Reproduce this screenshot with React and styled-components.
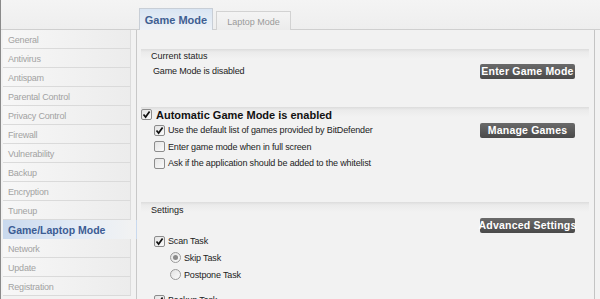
import React from 'react'
import styled, { createGlobalStyle } from 'styled-components'

const Global = createGlobalStyle`
  html, body { margin: 0; padding: 0; background: #f2f2f2; }
  body { font-family: "Liberation Sans", Arial, sans-serif; }
  #root { width: 600px; height: 299px; overflow: hidden; }
`

const navItems = [
  'General', 'Antivirus', 'Antispam', 'Parental Control', 'Privacy Control',
  'Firewall', 'Vulnerability', 'Backup', 'Encryption', 'Tuneup',
  'Game/Laptop Mode', 'Network', 'Update', 'Registration'
]

export default function App() {
  return (
    <>
      <Global />
      <Window>
        <TopBar>
          <TopLeft />
          <Tabs>
            <Tab active>Game Mode</Tab>
            <Tab>Laptop Mode</Tab>
          </Tabs>
        </TopBar>
        <Body>
          <Sidebar>
            {navItems.map((item) => (
              <NavItem key={item} selected={item === 'Game/Laptop Mode'}>{item}</NavItem>
            ))}
          </Sidebar>
          <Content>
            <Band>Current status</Band>
            <Row>
              <Label indent={16}>Game Mode is disabled</Label>
              <ActionButton>Enter Game Mode</ActionButton>
            </Row>
            <Spacer h={28} />
            <Band tall pad={0}>
              <CheckRow>
                <Checkbox checked />
                <BigLabel>Automatic Game Mode is enabled</BigLabel>
              </CheckRow>
            </Band>
            <Row>
              <CheckRow indent={17}>
                <Checkbox checked />
                <Label>Use the default list of games provided by BitDefender</Label>
              </CheckRow>
              <ActionButton>Manage Games</ActionButton>
            </Row>
            <Row h={17}>
              <CheckRow indent={17}>
                <Checkbox />
                <Label>Enter game mode when in full screen</Label>
              </CheckRow>
            </Row>
            <Row h={16}>
              <CheckRow indent={17}>
                <Checkbox />
                <Label>Ask if the application should be added to the whitelist</Label>
              </CheckRow>
            </Row>
            <Spacer h={31} />
            <Band tall>Settings</Band>
            <Row>
              <span />
              <ActionButton>Advanced Settings</ActionButton>
            </Row>
            <Row>
              <CheckRow indent={17}>
                <Checkbox checked />
                <Label>Scan Task</Label>
              </CheckRow>
            </Row>
            <Row h={17}>
              <CheckRow indent={33}>
                <Radio checked />
                <Label>Skip Task</Label>
              </CheckRow>
            </Row>
            <Row h={17}>
              <CheckRow indent={33}>
                <Radio />
                <Label>Postpone Task</Label>
              </CheckRow>
            </Row>
            <Spacer h={8} />
            <Row h={18}>
              <CheckRow indent={17}>
                <Checkbox checked />
                <Label>Backup Task</Label>
              </CheckRow>
            </Row>
          </Content>
        </Body>
      </Window>
    </>
  )
}

function Checkbox({ checked }) {
  return (
    <Box>
      {checked && (
        <svg width="9" height="9" viewBox="0 0 9 9">
          <path d="M1.5 4.5 L3.6 7 L7.6 1.5" fill="none" stroke="#111" strokeWidth="1.7" />
        </svg>
      )}
    </Box>
  )
}

function Radio({ checked }) {
  return <RadioCircle>{checked && <Dot />}</RadioCircle>
}

const Window = styled.div`
  width: 600px;
  height: 299px;
  display: flex;
  flex-direction: column;
  background: #f2f2f2;
  border-left: 1px solid #8a8a8a;
  box-sizing: border-box;
`

const TopBar = styled.div`
  height: 29px;
  display: flex;
  border-bottom: 1px solid #cfcfcf;
  background: linear-gradient(#f4f4f4, #eeeeee);
`

const TopLeft = styled.div`
  width: 138px;
  flex: none;
`

const Tabs = styled.div`
  display: flex;
  align-items: flex-end;
  gap: 3px;
`

const Tab = styled.div`
  height: ${(p) => (p.active ? 22 : 19)}px;
  width: ${(p) => (p.active ? 74 : 75)}px;
  box-sizing: border-box;
  margin-bottom: -1px;
  display: flex;
  align-items: center;
  justify-content: center;
  border: 1px solid ${(p) => (p.active ? '#c8ced6' : '#d2d2d2')};
  border-bottom: none;
  background: ${(p) => (p.active ? 'linear-gradient(#d9e5f3, #eef2f7)' : 'linear-gradient(#f4f4f4, #ececec)')};
  color: ${(p) => (p.active ? '#3f5f92' : '#9a9a9a')};
  font-size: ${(p) => (p.active ? '11px' : '9px')};
  font-weight: ${(p) => (p.active ? 'bold' : 'normal')};
  padding-top: ${(p) => (p.active ? '1px' : '2px')};
`

const Body = styled.div`
  flex: 1;
  display: flex;
  min-height: 0;
`

const Sidebar = styled.div`
  width: 136px;
  flex: none;
  padding-left: 2px;
  box-sizing: border-box;
  border-right: 1px solid #c8c8c8;
`

const NavItem = styled.div`
  height: 19px;
  box-sizing: border-box;
  padding-left: 5px;
  padding-top: 1px;
  display: flex;
  align-items: center;
  border-bottom: 1px solid ${(p) => (p.selected ? 'transparent' : '#dadada')};
  border-right: 1px solid ${(p) => (p.selected ? 'transparent' : '#dcdcdc')};
  background: ${(p) => (p.selected
    ? 'linear-gradient(90deg, #c9d9ee, #e6edf6 60%, #f2f2f2)'
    : 'linear-gradient(90deg, #f7f7f7, #ececec)')};
  color: ${(p) => (p.selected ? '#3c5c94' : '#a2a2a2')};
  font-size: ${(p) => (p.selected ? '10.5px' : '9px')};
  font-weight: ${(p) => (p.selected ? 'bold' : 'normal')};
  letter-spacing: ${(p) => (p.selected ? '0' : '-0.2px')};
  white-space: nowrap;
  width: ${(p) => (p.selected ? '134px' : '128px')};
`

const Content = styled.div`
  flex: 1;
  padding-top: 19px;
  padding-right: 5px;
  display: flex;
  flex-direction: column;
  border-right: 1px solid #c4c4c4;
  margin-right: 5px;
  overflow: hidden;
`

const Band = styled.div`
  height: ${(p) => (p.tall ? 15 : 14)}px;
  flex: none;
  padding-left: ${(p) => (p.pad ?? 10)}px;
  display: flex;
  align-items: center;
  margin-left: 4px;
  background: linear-gradient(#dcdcdc, #ebebeb 3px, #f2f2f2 10px);
  font-size: 9px;
  color: #222;
`

const Row = styled.div`
  height: ${(p) => p.h || 16}px;
  flex: none;
  display: flex;
  align-items: center;
  justify-content: space-between;
`

const Spacer = styled.div`
  height: ${(p) => p.h}px;
  flex: none;
`

const CheckRow = styled.div`
  display: flex;
  align-items: center;
  gap: 3px;
  padding-left: ${(p) => p.indent || 0}px;
`

const Label = styled.span`
  font-size: 9px;
  letter-spacing: -0.15px;
  color: #222;
  white-space: nowrap;
  padding-left: ${(p) => p.indent || 0}px;
`

const BigLabel = styled.span`
  font-size: 11px;
  font-weight: bold;
  color: #111;
  white-space: nowrap;
  padding-left: 1px;
`

const Box = styled.span`
  width: 11px;
  height: 11px;
  box-sizing: border-box;
  border: 1px solid #8c8c8c;
  border-radius: 2px;
  background: linear-gradient(135deg, #e4e4e4, #fafafa);
  display: inline-flex;
  align-items: center;
  justify-content: center;
  flex: none;
`

const RadioCircle = styled.span`
  width: 11px;
  height: 11px;
  box-sizing: border-box;
  border: 1px solid #9a9a9a;
  border-radius: 50%;
  background: linear-gradient(135deg, #e2e2e2, #fbfbfb);
  display: inline-flex;
  align-items: center;
  justify-content: center;
  flex: none;
`

const Dot = styled.span`
  width: 5px;
  height: 5px;
  border-radius: 50%;
  background: #8a8a8a;
`

const ActionButton = styled.div`
  width: 95px;
  height: 15px;
  box-sizing: border-box;
  border-radius: 2px;
  background: linear-gradient(#6a6a6a, #4a4a4a);
  color: #fff;
  font-size: 10.5px;
  font-weight: bold;
  display: flex;
  align-items: center;
  justify-content: center;
  letter-spacing: 0.2px;
  white-space: nowrap;
  margin-right: 14px;
`
